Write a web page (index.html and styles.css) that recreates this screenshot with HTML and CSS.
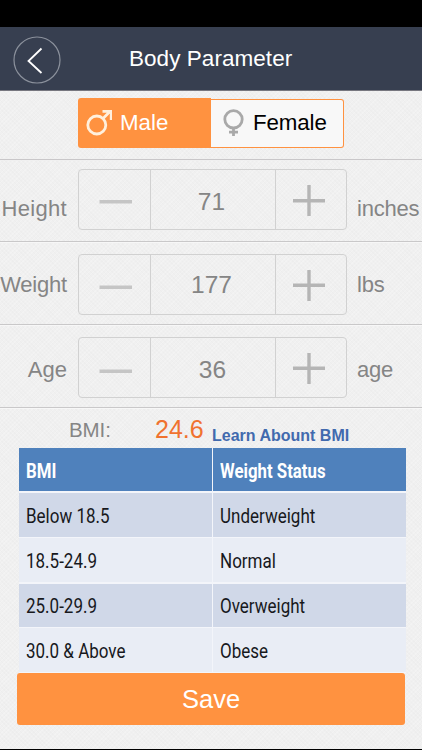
FILE: index.html
```html
<!DOCTYPE html>
<html lang="en">
<head>
<meta charset="utf-8">
<title>Body Parameter</title>
<link rel="stylesheet" href="styles.css">
</head>
<body>
<div class="status"></div>
<header class="header">
  <svg class="back" viewBox="0 0 50 50"><circle cx="25" cy="25" r="23"/><path d="M29.5 13.5 16.5 26 29.5 38"/></svg>
  <h1 class="title">Body Parameter</h1>
</header>
<section class="gender">
  <div class="segment">
    <div class="option male">
      <svg viewBox="0 0 28 28"><circle cx="12.8" cy="16" r="9"/><path d="M19 9.5 26 2.5M18.5 2.3H27.2V11"/></svg>
      <span>Male</span>
    </div>
    <div class="option female">
      <svg viewBox="0 0 22 28"><circle cx="11.5" cy="11.3" r="8.7"/><path d="M11.5 20V28M7 24.2H16"/></svg>
      <span>Female</span>
    </div>
  </div>
</section>
<section class="row height">
  <span class="label">Height</span>
  <div class="stepper">
    <svg viewBox="0 0 71 59"><path class="minus" d="M20.5 31.7H53"/></svg>
    <span class="value">71</span>
    <svg viewBox="0 0 70 59"><path class="plus" d="M17 30.7H49M33 15V46"/></svg>
  </div>
  <span class="unit">inches</span>
</section>
<section class="row weight">
  <span class="label">Weight</span>
  <div class="stepper">
    <svg viewBox="0 0 71 59"><path class="minus" d="M20.5 32.2H53"/></svg>
    <span class="value">177</span>
    <svg viewBox="0 0 70 59"><path class="plus" d="M17 30.2H49M33 15V46"/></svg>
  </div>
  <span class="unit">lbs</span>
</section>
<section class="row age">
  <span class="label">Age</span>
  <div class="stepper">
    <svg viewBox="0 0 71 59"><path class="minus" d="M20.5 33.3H53"/></svg>
    <span class="value">36</span>
    <svg viewBox="0 0 70 59"><path class="plus" d="M17 30.2H49M33 15V46"/></svg>
  </div>
  <span class="unit">age</span>
</section>
<section class="result">
  <span class="bmi-label">BMI:</span>
  <span class="bmi-value">24.6</span>
  <a class="learn">Learn Abount BMI</a>
</section>
<div class="table">
  <div class="cell head"><span>BMI</span></div><div class="cell head"><span>Weight Status</span></div>
  <div class="cell dark"><span>Below 18.5</span></div><div class="cell dark"><span>Underweight</span></div>
  <div class="cell"><span>18.5-24.9</span></div><div class="cell"><span>Normal</span></div>
  <div class="cell dark"><span>25.0-29.9</span></div><div class="cell dark"><span>Overweight</span></div>
  <div class="cell"><span>30.0 &amp; Above</span></div><div class="cell"><span>Obese</span></div>
</div>
<div class="save">Save</div>
<div class="bottom"></div>
</body>
</html>
```
FILE: styles.css
```css
* { box-sizing: border-box; }
body {
  margin: 0;
  width: 422px;
  height: 750px;
  overflow: hidden;
  display: flex;
  flex-direction: column;
  font-family: "Liberation Sans", Arial, sans-serif;
  color: #858585;
  background-color: #f0f0f0;
  background-image:
    repeating-linear-gradient(45deg, rgba(0,0,0,.012) 0 1px, transparent 1px 3px),
    repeating-linear-gradient(-45deg, rgba(255,255,255,.2) 0 1px, transparent 1px 3px);
}
svg { display: block; fill: none; flex: none; }
.status { height: 27px; flex: none; background: #000; }
.header {
  height: 64px;
  flex: none;
  display: flex;
  align-items: center;
  padding-left: 12px;
  background: #373f50;
  border-bottom: 1px solid #77777f;
}
.back { width: 50px; height: 50px; margin-top: 2px; }
.back circle { stroke: #8b919c; stroke-width: 1.2; }
.back path { stroke: #fff; stroke-width: 1.8; }
.title {
  margin: 0 0 0 67px;
  font-size: 22.5px;
  font-weight: 400;
  line-height: 30px;
  color: #fff;
  letter-spacing: .05px;
  white-space: nowrap;
}
.gender { height: 69px; flex: none; padding: 7px 0 0 78px; border-bottom: 1px solid #c9c7c9; }
.segment { display: flex; width: 266px; height: 50px; font-size: 22.3px; }
.option { display: flex; align-items: center; width: 133px; }
.male { background: #ff9240; color: #fff; border-radius: 3px 0 0 3px; padding-left: 6px; }
.male svg { width: 28px; height: 28px; stroke: #fff0dd; stroke-width: 2.8; margin-right: 8px; }
.female {
  height: 49px;
  margin-top: 1px;
  padding-left: 11px;
  color: #000;
  background: #f8f8f8;
  border: 1px solid #ff9240;
  border-left: 0;
  border-radius: 0 3px 3px 0;
}
.female svg { width: 22px; height: 28px; stroke: #a9a9a9; stroke-width: 2.8; margin: -3px 9px 0 0; }
.female span { margin-top: -1px; letter-spacing: -.1px; }
.row {
  display: grid;
  grid-template-columns: 67px 269px auto;
  column-gap: 11px;
  align-items: start;
  flex: none;
  border-bottom: 1px solid #c9c8c9;
  box-shadow: 0 1px 0 #f7f7f7;
  font-size: 22px;
  line-height: 26px;
}
.height { height: 82px; padding-top: 9px; }
.weight { height: 83px; padding-top: 12px; }
.age { height: 83px; padding-top: 12px; }
.label { justify-self: end; white-space: nowrap; }
.height .label { letter-spacing: .3px; }
.weight .label { letter-spacing: -.2px; }
.unit { margin-left: -1px; letter-spacing: -.2px; }
.height .label, .height .unit { margin-top: 27px; }
.weight .label, .weight .unit { margin-top: 18px; }
.age .label, .age .unit { margin-top: 20px; }
.stepper {
  display: flex;
  height: 61px;
  border: 1px solid #d1d1d1;
  border-radius: 4px;
}
.weight .stepper, .age .stepper { margin-top: -.5px; }
.stepper svg { height: 59px; }
.stepper svg:first-child { width: 71px; }
.stepper svg:last-child { width: 70px; }
.minus { stroke: #c5c5c5; stroke-width: 3.5; }
.plus { stroke: #b5b5b5; stroke-width: 3.4; }
.value {
  flex: 1;
  border: solid #d1d1d1;
  border-width: 0 1px;
  padding-right: 3px;
  text-align: center;
  font-size: 24.5px;
  line-height: 63px;
}
.age .value { line-height: 64px; padding-right: 1px; }
.weight .value { line-height: 59px; }
.result { display: flex; height: 40px; flex: none; white-space: nowrap; align-items: baseline; }
.bmi-label { width: 87px; margin-left: 68px; padding-left: 1px; font-size: 20.5px; letter-spacing: -.1px; line-height: 46px; position: relative; top: -1px; }
.bmi-value { width: 57px; font-size: 25px; color: #f0722f; }
.learn { font-size: 16px; font-weight: 700; color: #426aae; position: relative; top: 3px; }
.table {
  display: grid;
  grid-template-columns: 193px 193px;
  grid-template-rows: 43px 44px 44px 43px 44px;
  gap: 1.5px 1px;
  width: 387px;
  height: 225px;
  flex: none;
  margin-left: 19px;
  background: #f3f5fa;
  font-family: Roboto, sans-serif;
  font-size: 20px;
  color: #17181c;
}
.cell { display: flex; align-items: center; padding: 2px 0 0 7px; background: #e9edf5; white-space: nowrap; }
.cell span { transform: scaleX(.85); transform-origin: left; }
.dark { background: #d0d8e8; }
.head { background: #4f81bc; color: #fff; font-weight: 700; }
.head span { transform: scaleX(.84); }
.save {
  width: 388px;
  height: 52px;
  flex: none;
  margin-left: 17px;
  border-radius: 3px;
  background: #ff9240;
  color: #fff;
  font-size: 25.5px;
  line-height: 53px;
  text-align: center;
}
.bottom { height: 1px; margin-top: auto; flex: none; background: #000; }
```
